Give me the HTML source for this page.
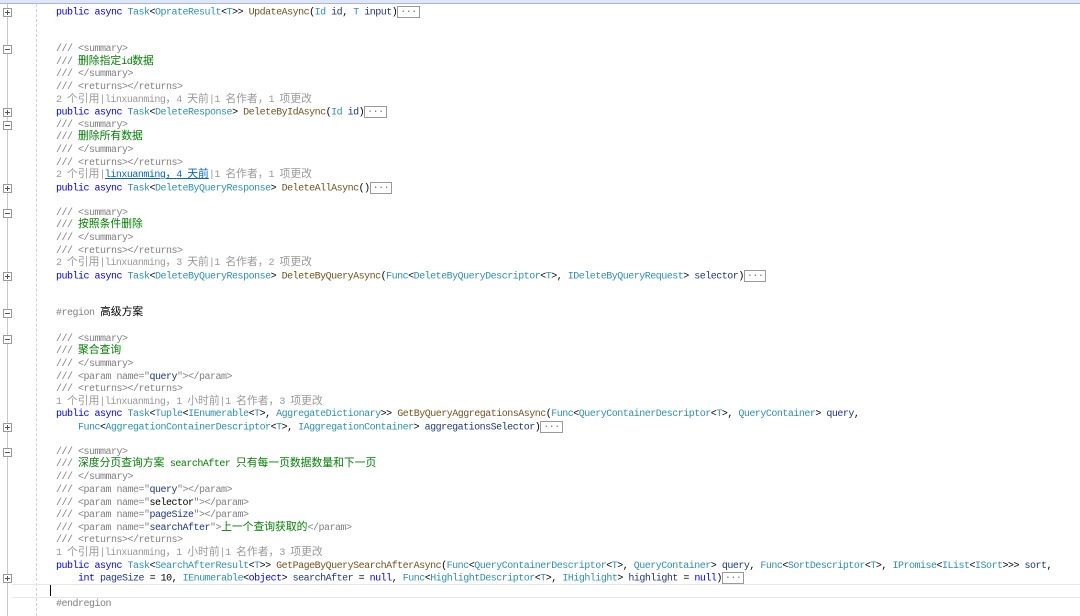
<!DOCTYPE html>
<html><head><meta charset="utf-8"><style>
html,body{margin:0;padding:0;background:#fff;width:1080px;height:616px;overflow:hidden;position:relative}
.top{position:absolute;left:0;top:0;width:1080px;height:3px;background:#dfe6f5;border-bottom:1px solid #a9b6d8}
.ln{position:absolute;left:56px;height:13px;line-height:13px;white-space:pre;font-family:"Liberation Mono",monospace;font-size:10px;letter-spacing:-0.5px;color:#000}
.z{font-family:"Noto Sans CJK SC",sans-serif;font-size:10.8px;letter-spacing:0;line-height:0}
.k{color:#0000ff}.t{color:#2b91af}.m{color:#74531f}.p{color:#1f377f}.c{color:#808080}.g{color:#008000}.l{color:#999}
.a{color:#0066cc;text-decoration:underline}
.e{display:inline-block;border:1px solid #999;height:10px;line-height:8px;color:#777;vertical-align:middle;padding:0 2px}
.b{position:absolute;left:3px;width:7px;height:7px;border:1px solid #999;background:#fff}
.b:before{content:"";position:absolute;left:1px;top:3px;width:5px;height:1px;background:#555}
.b.pl:after{content:"";position:absolute;left:3px;top:1px;width:1px;height:5px;background:#555}
</style></head><body>
<div class="top"></div>
<div style="position:absolute;left:7px;top:4px;width:1px;height:612px;background:#c8c8c8"></div>
<div style="position:absolute;left:36px;top:4px;width:0;height:612px;border-left:1px dashed #d0d0d0"></div>
<div style="position:absolute;left:12px;top:584px;width:1068px;height:12px;border-top:1px solid #e6e6ec;border-bottom:1px solid #e6e6ec"></div>
<div style="position:absolute;left:50px;top:585px;width:1px;height:11px;background:#000"></div>

<div class="b pl" style="top:8px"></div>
<div class="b" style="top:45px"></div>
<div class="b pl" style="top:108px"></div>
<div class="b" style="top:121px"></div>
<div class="b pl" style="top:184px"></div>
<div class="b" style="top:209px"></div>
<div class="b pl" style="top:272px"></div>
<div class="b" style="top:309px"></div>
<div class="b" style="top:335px"></div>
<div class="b pl" style="top:423px"></div>
<div class="b" style="top:448px"></div>
<div class="b pl" style="top:574px"></div>

<div class="ln" style="top:6px"><span class="k">public async </span><span class="t">Task</span>&lt;<span class="t">OprateResult</span>&lt;<span class="t">T</span>&gt;&gt; <span class="m">UpdateAsync</span>(<span class="t">Id</span> <span class="p">id</span>, <span class="t">T</span> <span class="p">input</span>)<span class="e">...</span></div>

<div class="ln c" style="top:43px">/// &lt;summary&gt;</div>
<div class="ln" style="top:56px"><span class="c">/// </span><span class="g"><span class="z">删除指定</span>id<span class="z">数据</span></span></div>
<div class="ln c" style="top:68px">/// &lt;/summary&gt;</div>
<div class="ln c" style="top:81px">/// &lt;returns&gt;&lt;/returns&gt;</div>
<div class="ln l" style="top:94px">2 <span class="z">个引用</span>|linxuanming<span class="z">，</span>4 <span class="z">天前</span>|1 <span class="z">名作者，</span>1 <span class="z">项更改</span></div>
<div class="ln" style="top:106px"><span class="k">public async </span><span class="t">Task</span>&lt;<span class="t">DeleteResponse</span>&gt; <span class="m">DeleteByIdAsync</span>(<span class="t">Id</span> <span class="p">id</span>)<span class="e">...</span></div>
<div class="ln c" style="top:119px">/// &lt;summary&gt;</div>
<div class="ln" style="top:131px"><span class="c">/// </span><span class="g z">删除所有数据</span></div>
<div class="ln c" style="top:144px">/// &lt;/summary&gt;</div>
<div class="ln c" style="top:157px">/// &lt;returns&gt;&lt;/returns&gt;</div>
<div class="ln l" style="top:169px">2 <span class="z">个引用</span>|<span class="a">linxuanming<span class="z">，</span>4 <span class="z">天前</span></span>|1 <span class="z">名作者，</span>1 <span class="z">项更改</span></div>
<div class="ln" style="top:182px"><span class="k">public async </span><span class="t">Task</span>&lt;<span class="t">DeleteByQueryResponse</span>&gt; <span class="m">DeleteAllAsync</span>()<span class="e">...</span></div>

<div class="ln c" style="top:207px">/// &lt;summary&gt;</div>
<div class="ln" style="top:219px"><span class="c">/// </span><span class="g z">按照条件删除</span></div>
<div class="ln c" style="top:232px">/// &lt;/summary&gt;</div>
<div class="ln c" style="top:245px">/// &lt;returns&gt;&lt;/returns&gt;</div>
<div class="ln l" style="top:257px">2 <span class="z">个引用</span>|linxuanming<span class="z">，</span>3 <span class="z">天前</span>|1 <span class="z">名作者，</span>2 <span class="z">项更改</span></div>
<div class="ln" style="top:270px"><span class="k">public async </span><span class="t">Task</span>&lt;<span class="t">DeleteByQueryResponse</span>&gt; <span class="m">DeleteByQueryAsync</span>(<span class="t">Func</span>&lt;<span class="t">DeleteByQueryDescriptor</span>&lt;<span class="t">T</span>&gt;, <span class="t">IDeleteByQueryRequest</span>&gt; <span class="p">selector</span>)<span class="e">...</span></div>

<div class="ln" style="top:307px"><span class="c">#region </span><span class="z">高级方案</span></div>

<div class="ln c" style="top:333px">/// &lt;summary&gt;</div>
<div class="ln" style="top:345px"><span class="c">/// </span><span class="g z">聚合查询</span></div>
<div class="ln c" style="top:358px">/// &lt;/summary&gt;</div>
<div class="ln" style="top:371px"><span class="c">/// &lt;param name="</span><span class="p">query</span><span class="c">"&gt;&lt;/param&gt;</span></div>
<div class="ln c" style="top:383px">/// &lt;returns&gt;&lt;/returns&gt;</div>
<div class="ln l" style="top:396px">1 <span class="z">个引用</span>|linxuanming<span class="z">，</span>1 <span class="z">小时前</span>|1 <span class="z">名作者，</span>3 <span class="z">项更改</span></div>
<div class="ln" style="top:408px"><span class="k">public async </span><span class="t">Task</span>&lt;<span class="t">Tuple</span>&lt;<span class="t">IEnumerable</span>&lt;<span class="t">T</span>&gt;, <span class="t">AggregateDictionary</span>&gt;&gt; <span class="m">GetByQueryAggregationsAsync</span>(<span class="t">Func</span>&lt;<span class="t">QueryContainerDescriptor</span>&lt;<span class="t">T</span>&gt;, <span class="t">QueryContainer</span>&gt; <span class="p">query</span>,</div>
<div class="ln" style="top:421px">    <span class="t">Func</span>&lt;<span class="t">AggregationContainerDescriptor</span>&lt;<span class="t">T</span>&gt;, <span class="t">IAggregationContainer</span>&gt; <span class="p">aggregationsSelector</span>)<span class="e">...</span></div>

<div class="ln c" style="top:446px">/// &lt;summary&gt;</div>
<div class="ln" style="top:458px"><span class="c">/// </span><span class="g"><span class="z">深度分页查询方案</span> searchAfter <span class="z">只有每一页数据数量和下一页</span></span></div>
<div class="ln c" style="top:471px">/// &lt;/summary&gt;</div>
<div class="ln" style="top:484px"><span class="c">/// &lt;param name="</span><span class="p">query</span><span class="c">"&gt;&lt;/param&gt;</span></div>
<div class="ln" style="top:497px"><span class="c">/// &lt;param name="</span>selector<span class="c">"&gt;&lt;/param&gt;</span></div>
<div class="ln" style="top:509px"><span class="c">/// &lt;param name="</span><span class="p">pageSize</span><span class="c">"&gt;&lt;/param&gt;</span></div>
<div class="ln" style="top:522px"><span class="c">/// &lt;param name="</span><span class="p">searchAfter</span><span class="c">"&gt;</span><span class="g z">上一个查询获取的</span><span class="c">&lt;/param&gt;</span></div>
<div class="ln c" style="top:534px">/// &lt;returns&gt;&lt;/returns&gt;</div>
<div class="ln l" style="top:547px">1 <span class="z">个引用</span>|linxuanming<span class="z">，</span>1 <span class="z">小时前</span>|1 <span class="z">名作者，</span>3 <span class="z">项更改</span></div>
<div class="ln" style="top:560px"><span class="k">public async </span><span class="t">Task</span>&lt;<span class="t">SearchAfterResult</span>&lt;<span class="t">T</span>&gt;&gt; <span class="m">GetPageByQuerySearchAfterAsync</span>(<span class="t">Func</span>&lt;<span class="t">QueryContainerDescriptor</span>&lt;<span class="t">T</span>&gt;, <span class="t">QueryContainer</span>&gt; <span class="p">query</span>, <span class="t">Func</span>&lt;<span class="t">SortDescriptor</span>&lt;<span class="t">T</span>&gt;, <span class="t">IPromise</span>&lt;<span class="t">IList</span>&lt;<span class="t">ISort</span>&gt;&gt;&gt; <span class="p">sort</span>,</div>
<div class="ln" style="top:572px">    <span class="k">int</span> <span class="p">pageSize</span> = 10, <span class="t">IEnumerable</span>&lt;<span class="k">object</span>&gt; <span class="p">searchAfter</span> = <span class="k">null</span>, <span class="t">Func</span>&lt;<span class="t">HighlightDescriptor</span>&lt;<span class="t">T</span>&gt;, <span class="t">IHighlight</span>&gt; <span class="p">highlight</span> = <span class="k">null</span>)<span class="e">...</span></div>
<div class="ln c" style="top:598px">#endregion</div>
</body></html>
